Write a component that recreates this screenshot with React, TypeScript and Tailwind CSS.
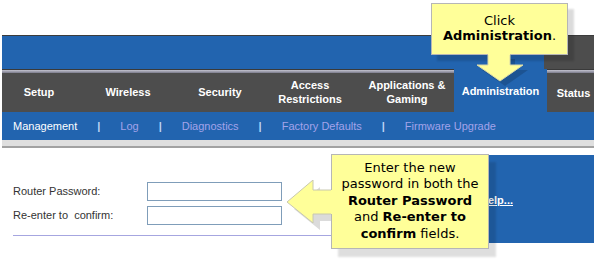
import React from 'react';

const navItems = [
  { label: ['Setup'], w: 'w-[74px]' },
  { label: ['Wireless'], w: 'w-[104px]' },
  { label: ['Security'], w: 'w-[80px]' },
  { label: ['Access', 'Restrictions'], w: 'w-[100px]' },
  { label: ['Applications &', 'Gaming'], w: 'w-[94px]' },
];

const subItems = ['Log', 'Diagnostics', 'Factory Defaults', 'Firmware Upgrade'];

const Pipe = () => <span className="text-[#bcd4f4] font-bold">|</span>;

export default function App() {
  return (
    <div className="relative w-[596px] h-[263px] bg-white overflow-hidden font-['Liberation_Sans',Arial,sans-serif]">
      <div className="pl-[2px] pr-[2px] pt-[35px]">
        {/* Header band */}
        <div className="flex h-[34px] border-t border-[#3c3c3c]">
          <div className="flex-1 bg-[#2264af]" />
          <div className="w-[50px] bg-[#4d4d4d]" />
        </div>

        {/* Main tabs */}
        <div className="flex h-[43px] text-white text-[11px] font-bold leading-[14px]">
          {navItems.map((item) => (
            <div key={item.label[0]} className={`${item.w} flex flex-col bg-[#4d4d4d]`}>
              <div className="h-[1px] bg-[#3a3a3a]" />
              <div className="h-[3px] bg-gradient-to-b from-[#c4c4d0] to-[#7c7c8c]" />
              <div className="flex-1 flex flex-col items-center justify-center text-center pb-[1px]">
                {item.label.map((l) => (
                  <span key={l}>{l}</span>
                ))}
              </div>
            </div>
          ))}
          <div className="w-[93px] flex items-center justify-center bg-[#2264af]">Administration</div>
          <div className="flex-1 flex flex-col bg-[#4d4d4d]">
            <div className="h-[1px] bg-[#3a3a3a]" />
            <div className="h-[3px] bg-gradient-to-b from-[#c4c4d0] to-[#7c7c8c]" />
            <div className="flex-1 flex items-center justify-center pl-[6px]">Status</div>
          </div>
        </div>

        {/* Sub tabs */}
        <div className="flex items-center h-[28px] bg-[#2264af] pl-[11px] gap-[20px] text-[11px] text-[#a3a3ea]">
          <span className="text-white">Management</span>
          {subItems.map((s) => (
            <React.Fragment key={s}>
              <Pipe />
              <span>{s}</span>
            </React.Fragment>
          ))}
        </div>
        <div className="h-[6px] bg-[#dfdfdf]" />
        <div className="h-[2px] bg-[#a2a2a2]" />

        {/* Content */}
        <div className="flex">
          <div className="flex-1 pl-[11px] pt-[34px]">
            <div className="flex flex-col gap-[5px] text-[11px] text-[#333]">
              <div className="flex items-center">
                <span className="w-[134px]">Router Password:</span>
                <div className="w-[135px] h-[19px] border border-[#7f9db9]" />
              </div>
              <div className="flex items-center">
                <span className="w-[134px]">Re-enter to&nbsp; confirm:</span>
                <div className="w-[135px] h-[19px] border border-[#7f9db9]" />
              </div>
            </div>
            <div className="mt-[10px] h-[1px] bg-[#a6a6e0] mr-[6px]" />
          </div>
          <div className="w-[128px] h-[88px] mt-[7px] bg-[#2264af] pl-[14px] pt-[32px]">
            <span className="text-white text-[11px] font-bold underline">Help...</span>
          </div>
        </div>
      </div>

      {/* Callout: Click Administration */}
      <div className="absolute left-[431px] top-[3px] w-[150px] h-[85px] font-['DejaVu_Sans',Verdana,sans-serif]">
        <svg className="absolute left-[51px] top-[56px]" width="50" height="32">
          <polygon points="11,0 33,0 33,11 46,11 23,27 0,11 11,11" fill="rgba(0,0,0,0.16)" />
        </svg>
        <div className="absolute left-0 top-0 w-[137px] h-[52px] bg-[#ffff99] border border-[#b6b6b6] shadow-[6px_6px_2px_rgba(0,0,0,0.14)] text-center text-[13px] leading-[15px] text-black pt-[9px]">
          <div>Click</div>
          <div>
            <span className="font-bold">Administration</span>.
          </div>
        </div>
        <svg className="absolute left-[46px] top-[51px]" width="50" height="32">
          <polygon points="11,0 33,0 33,11 46,11 23,27 0,11 11,11" fill="#ffff99" />
          <polyline points="11,1 11,11 0,11 23,27 46,11 33,11 33,1" fill="none" stroke="#d8d8a8" strokeWidth="1" />
        </svg>
      </div>

      {/* Callout: Enter the new password */}
      <div className="absolute left-[287px] top-[154px] w-[212px] h-[106px] font-['DejaVu_Sans',Verdana,sans-serif]">
        <svg className="absolute left-[7px] top-[33px]" width="50" height="46">
          <polygon points="0,22 26,0 26,9 44,9 44,34 26,34 26,43" fill="rgba(0,0,0,0.14)" />
        </svg>
        <div className="absolute left-[44px] top-0 w-[158px] h-[95px] bg-[#ffff99] border border-[#b6b6b6] shadow-[7px_8px_2px_rgba(0,0,0,0.13)] text-center text-[13px] leading-[16.4px] text-black pt-[5px]">
          <div>Enter the new</div>
          <div>password in both the</div>
          <div className="font-bold">Router Password</div>
          <div>
            and <span className="font-bold">Re-enter to</span>
          </div>
          <div>
            <span className="font-bold">confirm</span> fields.
          </div>
        </div>
        <svg className="absolute left-0 top-[26px]" width="50" height="46">
          <polygon points="0,22 26,0 26,10 45,10 45,34 26,34 26,43" fill="#ffff99" />
          <polyline points="44,10 26,10 26,0 0,22 26,43 26,34 44,34" fill="none" stroke="#c8c8b0" strokeWidth="1" />
        </svg>
      </div>
    </div>
  );
}
